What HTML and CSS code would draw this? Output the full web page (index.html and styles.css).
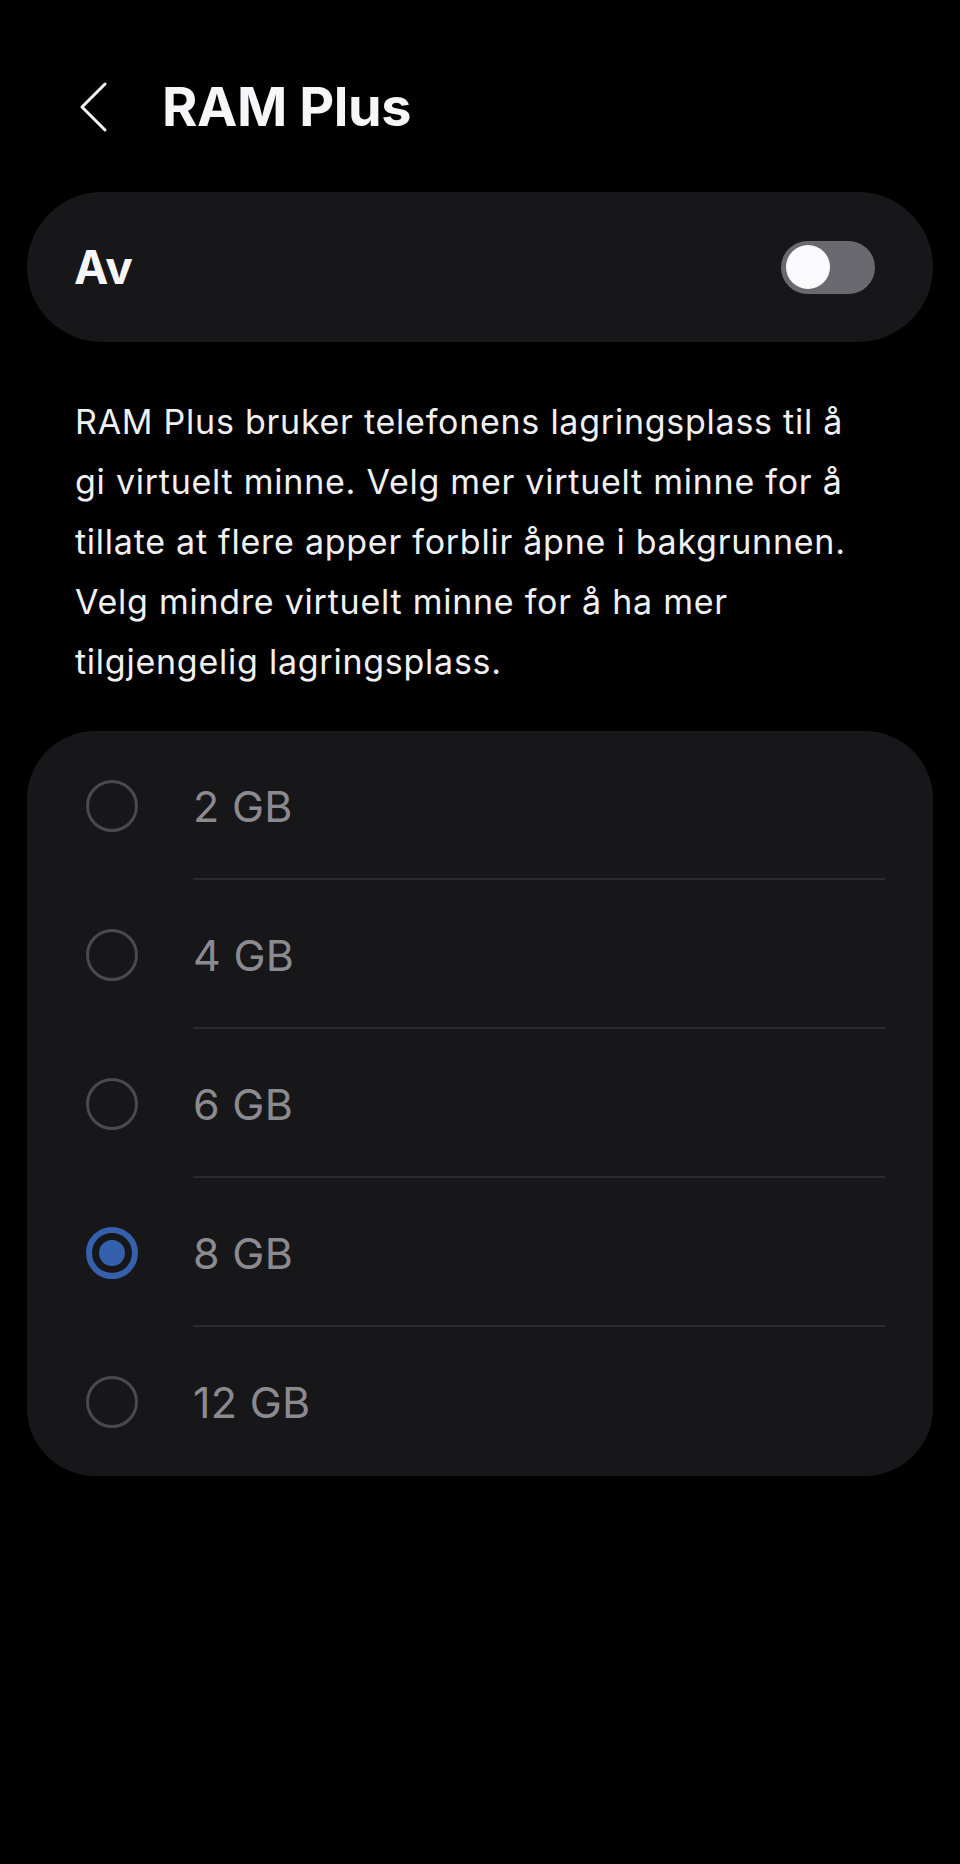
FILE: index.html
```html
<!DOCTYPE html>
<html lang="no">
<head>
<meta charset="utf-8">
<title>RAM Plus</title>
<link rel="stylesheet" href="styles.css">
</head>
<body>
<header class="header">
  <svg class="back" width="30" height="52" viewBox="0 0 30 52" aria-hidden="true">
    <path d="M26 4 L3 27 L26 50" fill="none" stroke="#f4f4f6" stroke-width="3" stroke-linecap="round" stroke-linejoin="round"/>
  </svg>
  <h1 class="title">RAM Plus</h1>
</header>

<section class="switch-card">
  <span class="switch-label">Av</span>
  <span class="toggle"><span class="thumb"></span></span>
</section>

<p class="desc">RAM Plus bruker telefonens lagringsplass til å<br>gi virtuelt minne. Velg mer virtuelt minne for å<br>tillate at flere apper forblir åpne i bakgrunnen.<br>Velg mindre virtuelt minne for å ha mer<br>tilgjengelig lagringsplass.</p>

<section class="list-card">
  <div class="opt"><span class="radio"></span><span class="opt-text">2 GB</span></div>
  <div class="opt"><span class="radio"></span><span class="opt-text">4 GB</span></div>
  <div class="opt"><span class="radio"></span><span class="opt-text">6 GB</span></div>
  <div class="opt"><span class="radio radio-on"><span class="dot"></span></span><span class="opt-text">8 GB</span></div>
  <div class="opt"><span class="radio"></span><span class="opt-text opt-last">12 GB</span></div>
</section>
</body>
</html>
```

FILE: styles.css
```css
* { box-sizing: border-box; }

html, body {
  margin: 0;
  padding: 0;
  background: #000;
}

body {
  font-family: Inter, "Noto Sans", sans-serif;
  color: #f4f4f6;
  width: 960px;
  min-height: 1864px;
}

.header {
  display: flex;
  align-items: center;
  height: 172px;
  margin-top: 20px;
  padding-left: 79px;
}

.back {
  display: block;
  flex: none;
}

.title {
  margin: 0 0 0 53px;
  font-size: 54px;
  font-weight: 700;
  letter-spacing: -0.4px;
  color: #f6f6f8;
}

.switch-card {
  display: flex;
  align-items: center;
  justify-content: space-between;
  height: 150px;
  margin: 0 27px;
  padding: 0 58px 0 47px;
  border-radius: 75px;
  background: #17171a;
}

.switch-label {
  font-size: 46px;
  font-weight: 700;
  color: #f6f6f8;
}

.toggle {
  display: flex;
  align-items: center;
  width: 94px;
  height: 53px;
  padding-left: 5px;
  border-radius: 27px;
  background: #6a696f;
}

.thumb {
  width: 44px;
  height: 44px;
  border-radius: 50%;
  background: #fbfbfe;
}

.desc {
  margin: 50px 0 0;
  padding-left: 75px;
  font-size: 34px;
  line-height: 60px;
  letter-spacing: 0.75px;
  color: #f0f0f2;
}

.list-card {
  margin: 39px 27px 0;
  border-radius: 68px;
  background: #17171a;
  overflow: hidden;
}

.opt {
  display: flex;
  align-items: center;
  height: 149px;
  padding-left: 59px;
}

.radio {
  display: flex;
  align-items: center;
  justify-content: center;
  flex: none;
  width: 52px;
  height: 52px;
  border: 3px solid #4a4a4d;
  border-radius: 50%;
}

.radio-on {
  border: 6px solid #3560ad;
}

.dot {
  width: 26px;
  height: 26px;
  border-radius: 50%;
  background: #3560ad;
}

.opt-text {
  display: flex;
  align-items: center;
  flex: 1;
  align-self: stretch;
  margin: 0 48px 0 55px;
  border-bottom: 2px solid #2b2b2e;
  padding-top: 2px;
  font-size: 43px;
  letter-spacing: 0.3px;
  color: #8b8a8f;
}

.opt-last {
  border-bottom: none;
  padding-top: 0;
}
```
